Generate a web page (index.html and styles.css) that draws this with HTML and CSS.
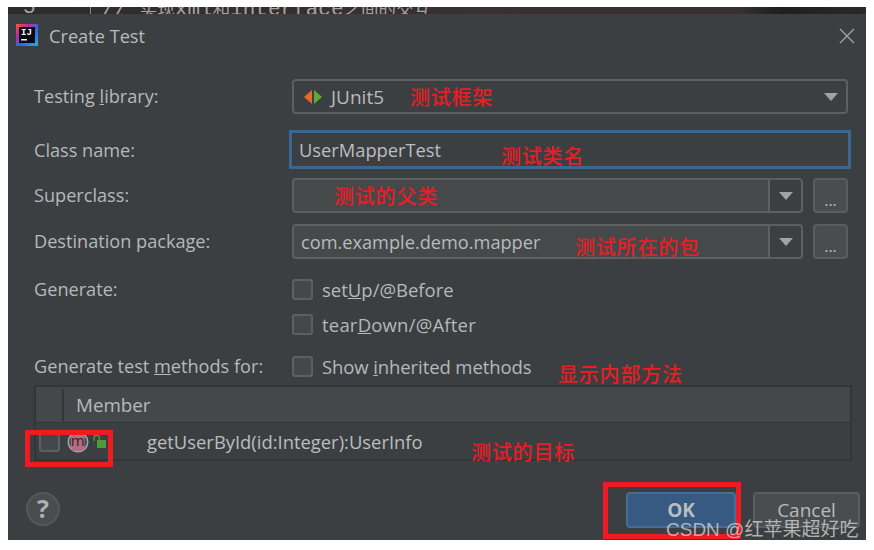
FILE: index.html
```html
<!DOCTYPE html>
<html lang="zh">
<head>
<meta charset="utf-8">
<title>Create Test</title>
<link rel="stylesheet" href="styles.css">
</head>
<body>
<div class="shot">
  <div class="strip"><span class="strip-num">5</span><span class="strip-gutter"></span><span class="strip-code">// <span class="cjk">实现</span>xml<span class="cjk">和</span>interface<span class="cjk">之间的交互</span></span></div>
  <div class="dialog">
    <header class="titlebar">
      <svg class="app-icon" width="22" height="22" viewBox="0 0 22 22">
        <defs><linearGradient id="ij" x1="0" y1="0" x2="1" y2="1"><stop offset="0" stop-color="#f5583a"/><stop offset=".28" stop-color="#c02a9a"/><stop offset=".6" stop-color="#2a6ae8"/><stop offset="1" stop-color="#18b0f0"/></linearGradient></defs>
        <rect width="22" height="22" fill="url(#ij)"/>
        <rect x="3" y="3" width="16" height="16" fill="#0a0a12"/>
        <text x="5" y="11" class="ij-text">IJ</text>
        <rect x="5" y="15" width="6" height="1.5" fill="#eee"/>
      </svg>
      <span class="title">Create Test</span>
      <svg class="close" width="16" height="16" viewBox="0 0 16 16"><path d="M1 1L15 15M15 1L1 15" stroke="#a3a5a7" stroke-width="1.3" fill="none"/></svg>
    </header>
    <main class="form">
      <div class="row row-lib">
        <label class="label">Testing <u>l</u>ibrary:</label>
        <div class="combo flat">
          <svg class="junit" width="18" height="16" viewBox="0 0 18 16"><path d="M8 1L0 8L8 15Z" fill="#e8682a"/><path d="M10 1L18 8L10 15Z" fill="#5fa83a"/></svg>
          <span class="value">JUnit5</span>
          <span class="arrow-flat"></span>
        </div>
      </div>
      <div class="row row-class">
        <label class="label label-flush">Class name:</label>
        <div class="field focused">UserMapperTest</div>
      </div>
      <div class="row row-super">
        <label class="label">Superclass:</label>
        <div class="combo"><span class="value"></span><span class="arrow-box"><i></i></span></div>
        <button class="more">...</button>
      </div>
      <div class="row row-dest">
        <label class="label">Destination package:</label>
        <div class="combo"><span class="value">com.example.demo.mapper</span><span class="arrow-box"><i></i></span></div>
        <button class="more">...</button>
      </div>
      <div class="row row-gen">
        <label class="label">Generate:</label>
        <div class="check"><span class="box"></span><span class="check-text">set<u>U</u>p/@Before</span></div>
      </div>
      <div class="row row-gen2">
        <span class="label"></span>
        <div class="check"><span class="box"></span><span class="check-text text-wide">tear<u>D</u>own/@After</span></div>
      </div>
      <div class="row row-show">
        <label class="label">Generate test <u>m</u>ethods for:</label>
        <div class="check"><span class="box"></span><span class="check-text text-tight">Show <u>i</u>nherited methods</span></div>
      </div>
    </main>
    <section class="table">
      <div class="thead"><span class="th-check"></span><span class="th-member">Member</span></div>
      <div class="trow">
        <span class="box"></span>
        <svg class="m-icon" width="22" height="22" viewBox="0 0 22 22"><circle cx="11" cy="11" r="10.5" fill="#9aa7b0"/><circle cx="11" cy="11" r="9" fill="#4a4f52"/><rect x="4" y="0" width="13.5" height="20" rx="4" fill="#b96a80"/><text x="10.8" y="15" text-anchor="middle" class="m-letter">m</text></svg>
        <svg class="lock" width="13" height="14" viewBox="0 0 13 14"><path d="M1 7V4a2.7 2.7 0 0 1 5.4 0V6" fill="none" stroke="#4e9a3c" stroke-width="1.4"/><rect x="4" y="6" width="9" height="8" fill="#4e9a3c"/></svg>
        <span class="method">getUserById(id:Integer):UserInfo</span>
      </div>
    </section>
    <footer class="footer">
      <div class="help">?</div>
      <div class="buttons">
        <button class="btn ok">OK</button>
        <button class="btn cancel">Cancel</button>
      </div>
    </footer>
  </div>
  <div class="note n1">测试框架</div>
  <div class="note n2">测试类名</div>
  <div class="note n3">测试的父类</div>
  <div class="note n4">测试所在的包</div>
  <div class="note n5">显示内部方法</div>
  <div class="note n6">测试的目标</div>
  <div class="redbox rb1"></div>
  <div class="redbox rb2"></div>
  <div class="watermark">CSDN @红苹果超好吃</div>
</div>
</body>
</html>
```
FILE: styles.css
```css
* { box-sizing: border-box; }
html, body { margin: 0; padding: 0; background: #fff; }
body { width: 874px; height: 550px; overflow: hidden; font-family: "Open Sans", "Noto Sans CJK SC", sans-serif; }
.shot { position: relative; width: 858px; height: 533px; margin: 7px 0 0 8px; }

.strip { height: 7px; overflow: hidden; position: relative; white-space: nowrap; color: #a8a4a0; font: 21px/22px "Liberation Mono", "Noto Sans CJK SC", monospace;
  background: linear-gradient(90deg, #2f2b2c 0, #3a3032 60%, #3a3032 85%, #201e1e 90%, #2a2a2a 100%); }
.strip-num { position: absolute; left: 15px; top: -10px; }
.strip-gutter { position: absolute; left: 82px; top: 0; width: 1px; height: 7px; background: #8a8684; }
.strip-code { position: absolute; left: 94px; top: -10px; }
.cjk { font-family: "Noto Sans CJK SC", sans-serif; font-size: 17.5px; }

.dialog { height: 526px; background: #3c3f41; color: #bbbbbb; display: flex; flex-direction: column; font-size: 18px; }
.titlebar { height: 44px; position: relative; display: flex; align-items: center; padding: 0 11px 0 8px; flex: none; }
.app-icon { flex: none; margin-top: -2px; }
.ij-text { font: bold 9px "Liberation Mono", monospace; fill: #fff; }
.title { margin-left: 11px; font-size: 18.2px; color: #b8babc; }
.close { margin-left: auto; }

.form { padding: 21px 18px 0 26px; display: flex; flex-direction: column; flex: none; height: 327px; }
.row { display: flex; align-items: center; flex: none; }
.label { width: 258px; flex: none; color: #b6b8ba; font-size: 18.15px; margin-top: -2px; white-space: nowrap; }
.label-flush { margin-top: 0; }
.row-lib { height: 35px; }
.row-class { height: 33px; margin-top: 19px; }
.row-super { height: 35px; margin-top: 12px; }
.row-dest { height: 35px; margin-top: 11px; }
.row-gen { height: 21px; margin-top: 20px; }
.row-gen2 { height: 21px; margin-top: 14px; }
.row-show { height: 21px; margin-top: 21px; }

.combo { flex: 1; height: 100%; display: flex; align-items: center; background: #45494a; border: 2px solid #5e6060; border-radius: 4px; }
.combo.flat { background: #3c3f41; padding-left: 10px; }
.junit { flex: none; }
.value { flex: 1; padding-left: 7px; font-size: 18.2px; color: #b8babc; }
.flat .value { padding-left: 9px; font-size: 19px; }
.arrow-flat { width: 0; height: 0; border-left: 7px solid transparent; border-right: 7px solid transparent; border-top: 8px solid #a0a2a4; margin-right: 8px; }
.arrow-box { width: 33px; height: 100%; flex: none; border-left: 2px solid #5e6060; background: #3c3f41; display: flex; align-items: center; justify-content: center; border-radius: 0 3px 3px 0; }
.arrow-box i { width: 0; height: 0; border-left: 7px solid transparent; border-right: 7px solid transparent; border-top: 8px solid #a0a2a4; }
.more { width: 35px; height: 100%; margin-left: 10px; flex: none; background: #4a4d4f; border: 2px solid #5a5d5f; border-radius: 4px; color: #b8babc; font: 16px/1 "Open Sans", sans-serif; padding: 8px 0 0; }

.field { flex: 1; height: 100%; background: #45494a; color: #bcbec0; font-size: 18.3px; display: flex; align-items: center; padding-left: 7px; }
.field.focused { background: #3c3f41; box-shadow: 0 0 0 3px #3d6790; }

.check { display: flex; align-items: center; color: #b6b8ba; }
.check-text { font-size: 18.5px; white-space: nowrap; }
.text-wide { letter-spacing: .2px; }
.text-tight { letter-spacing: -.1px; }
.box { width: 21px; height: 21px; flex: none; background: #43494a; border: 2px solid #5e6060; border-radius: 3px; margin-right: 9px; }

.table { margin: 0 14px 0 26px; height: 76px; border: 2px solid #333537; flex: none; display: flex; flex-direction: column; }
.thead { height: 36px; flex: none; background: #45484a; border-bottom: 1px solid #333537; display: flex; align-items: center; }
.th-check { width: 28px; height: 32px; border-right: 2px solid #333537; flex: none; }
.th-member { margin-left: 12px; font-size: 18.8px; color: #b8babc; }
.trow { flex: 1; display: flex; align-items: center; padding-top: 1px; }
.trow .box { margin: 0 7px 0 3px; }
.m-icon { flex: none; margin-right: 4px; }
.m-letter { font: 15px "Open Sans", sans-serif; fill: #33232a; }
.lock { flex: none; margin-top: -2px; }
.method { margin-left: 41px; font-size: 18.4px; color: #bbbdbf; }

.footer { flex: 1; display: flex; justify-content: space-between; align-items: flex-start; padding: 31px 6px 0 18px; }
.help { width: 34px; height: 34px; border-radius: 50%; background: #4a4d4f; border: 2px solid #55585a; color: #aeb0b2; font: bold 25px/29px "Open Sans", sans-serif; text-align: center; }
.buttons { display: flex; gap: 17px; }
.btn { height: 36px; border-radius: 4px; font: 19px "Open Sans", sans-serif; padding: 0; }
.ok { width: 110px; background: #375a82; border: 2px solid #466d94; color: #b9bdc1; font-weight: 700; }
.cancel { width: 107px; background: #4a4d4f; border: 2px solid #5a5d5f; color: #b8babc; }

.note { position: absolute; color: #ea1c24; font: 500 20px/24px "Noto Sans CJK SC", sans-serif; letter-spacing: .8px; white-space: nowrap; }
.n1 { left: 402px; top: 78px; }
.n2 { left: 493px; top: 137px; }
.n3 { left: 326px; top: 177px; }
.n4 { left: 567px; top: 228px; }
.n5 { left: 550px; top: 355px; }
.n6 { left: 463px; top: 433px; }

.redbox { position: absolute; border: 5px solid #ed1c24; }
.rb1 { left: 17px; top: 423px; width: 88px; height: 37px; }
.rb2 { left: 595px; top: 475px; width: 138px; height: 57px; }

.watermark { position: absolute; left: 658px; top: 511px; font: 19px/24px "Liberation Sans", "Noto Sans CJK SC", sans-serif; color: rgba(222,222,222,.72); white-space: nowrap; }
```
